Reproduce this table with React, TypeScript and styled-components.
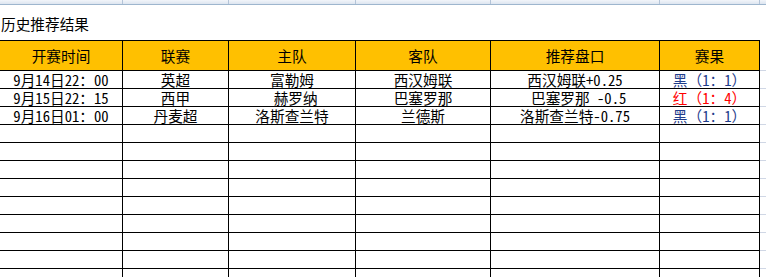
import React from "react";
import styled, { createGlobalStyle } from "styled-components";

const GlobalStyle = createGlobalStyle`
  html, body {
    margin: 0;
    padding: 0;
    background: #ffffff;
  }
  body {
    font-family: "Noto Sans Mono CJK SC", "Noto Sans CJK SC", sans-serif;
    color: #000000;
  }
`;

// column widths include each cell's right border
const COLUMNS = "123px 106px 127px 135px 169px 100px 1fr";

const Sheet = styled.div`
  width: 766px;
  height: 277px;
  overflow: hidden;
  background: #ffffff;
`;

const ColumnStrip = styled.div`
  display: grid;
  grid-template-columns: ${COLUMNS};
  height: 4px;
  border-bottom: 1px solid #9eb6ce;
  background: linear-gradient(#f2f5fa, #dde5f0);
  overflow: hidden;
`;

const ColumnLetter = styled.div`
  border-right: 1px solid #b4c4d8;
  text-align: center;
  font-family: "Liberation Sans", sans-serif;
  font-size: 11px;
  line-height: 11px;
  color: #4a5a72;
  margin-top: -9px;
  height: 13px;

  &:last-child {
    border-right: none;
  }
`;

const TitleRow = styled.div`
  height: 35px;
  box-sizing: border-box;
  padding: 10px 0 0 1px;
  font-size: 14.67px;
  line-height: 17px;
  white-space: pre;
`;

const Row = styled.div<{ $head?: boolean }>`
  display: grid;
  grid-template-columns: ${COLUMNS};
  height: ${(p) => (p.$head ? "31px" : "18px")};
`;

const Cell = styled.div<{ $head?: boolean; $color?: string }>`
  box-sizing: border-box;
  border-right: 1px solid #000000;
  border-bottom: 1px solid #000000;
  border-top: ${(p) => (p.$head ? "1px solid #000000" : "none")};
  background: ${(p) => (p.$head ? "#ffc000" : "#ffffff")};
  color: ${(p) => p.$color || "#000000"};
  font-size: 14.67px;
  line-height: ${(p) => (p.$head ? "29px" : "17px")};
  text-align: center;
  white-space: pre;
  overflow: hidden;
`;

const SpillCell = styled.div<{ $head?: boolean }>`
  box-sizing: border-box;
  border-bottom: 1px solid ${(p) => (p.$head ? "#d0d7e5" : "#d0d7e5")};
  margin-top: ${(p) => (p.$head ? "1px" : "0")};
`;

const HEADERS = ["开赛时间", "联赛", "主队", "客队", "推荐盘口", "赛果"];

type Match = {
  time: string;
  league: string;
  home: string;
  away: string;
  tip: string;
  result: string;
  win: boolean;
};

const MATCHES: Match[] = [
  {
    time: "9月14日22：00",
    league: "英超",
    home: "富勒姆",
    away: "西汉姆联",
    tip: "西汉姆联+0.25",
    result: "黑（1：1）",
    win: false,
  },
  {
    time: "9月15日22：15",
    league: "西甲",
    home: " 赫罗纳",
    away: "巴塞罗那",
    tip: " 巴塞罗那 -0.5",
    result: "红（1：4）",
    win: true,
  },
  {
    time: "9月16日01：00",
    league: "丹麦超",
    home: "洛斯查兰特",
    away: "兰德斯",
    tip: "洛斯查兰特-0.75",
    result: "黑（1：1）",
    win: false,
  },
];

const EMPTY_ROWS = 9;

export default function App() {
  return (
    <Sheet>
      <GlobalStyle />
      <ColumnStrip>
        {["A", "B", "C", "D", "E", "F", ""].map((l, i) => (
          <ColumnLetter key={i}>{l}</ColumnLetter>
        ))}
      </ColumnStrip>
      <TitleRow>历史推荐结果</TitleRow>

      <Row $head>
        {HEADERS.map((h) => (
          <Cell key={h} $head>
            {h}
          </Cell>
        ))}
        <SpillCell $head />
      </Row>

      {MATCHES.map((m) => (
        <Row key={m.time}>
          <Cell>{m.time}</Cell>
          <Cell>{m.league}</Cell>
          <Cell>{m.home}</Cell>
          <Cell>{m.away}</Cell>
          <Cell>{m.tip}</Cell>
          <Cell $color={m.win ? "#ff0000" : "#1f3d8c"}>{m.result}</Cell>
          <SpillCell />
        </Row>
      ))}

      {Array.from({ length: EMPTY_ROWS }).map((_, i) => (
        <Row key={i}>
          <Cell />
          <Cell />
          <Cell />
          <Cell />
          <Cell />
          <Cell />
          <SpillCell />
        </Row>
      ))}
    </Sheet>
  );
}
